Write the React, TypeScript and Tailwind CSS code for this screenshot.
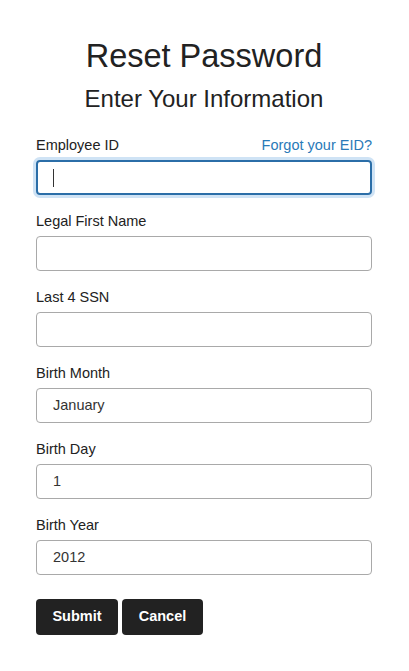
import React from 'react';

const fields = [
  { label: 'Legal First Name', value: '' },
  { label: 'Last 4 SSN', value: '' },
  { label: 'Birth Month', value: 'January' },
  { label: 'Birth Day', value: '1' },
  { label: 'Birth Year', value: '2012' },
];

export default function App() {
  return (
    <div className="min-h-[671px] bg-white pl-9 pr-[37px] pt-[38px] text-[#222] [font-family:'Liberation_Sans',Arial,sans-serif]">
      <h1 className="text-center text-[32.5px] leading-[37px]">Reset Password</h1>
      <h2 className="mt-[10px] text-center text-[24px] leading-[28px]">Enter Your Information</h2>

      <div className="mt-[22px]">
        <div className="flex items-center justify-between text-[14.5px] leading-5">
          <span>Employee ID</span>
          <a className="text-[#2a7ab8]" href="#">Forgot your EID?</a>
        </div>
        <div className="mt-[5px] flex h-[35px] items-center rounded-[4px] border-2 border-[#2b6ea8] pl-[15px] shadow-[0_0_0_3px_#cfe3f5]">
          <span className="h-[18px] w-px bg-[#333]" />
        </div>
      </div>

      {fields.map((f) => (
        <div key={f.label} className="mt-[16px]">
          <div className="text-[14.5px] leading-5">{f.label}</div>
          <div className="mt-[5px] flex h-[35px] items-center rounded-[4px] border border-[#a9a9a9] pl-4 text-[14.5px] text-[#333]">
            {f.value}
          </div>
        </div>
      ))}

      <div className="mt-[24px] flex gap-1">
        <button className="h-9 w-[82px] rounded-[4px] bg-[#222] text-[14.5px] font-bold text-white">Submit</button>
        <button className="h-9 w-[81px] rounded-[4px] bg-[#222] text-[14.5px] font-bold text-white">Cancel</button>
      </div>
    </div>
  );
}
